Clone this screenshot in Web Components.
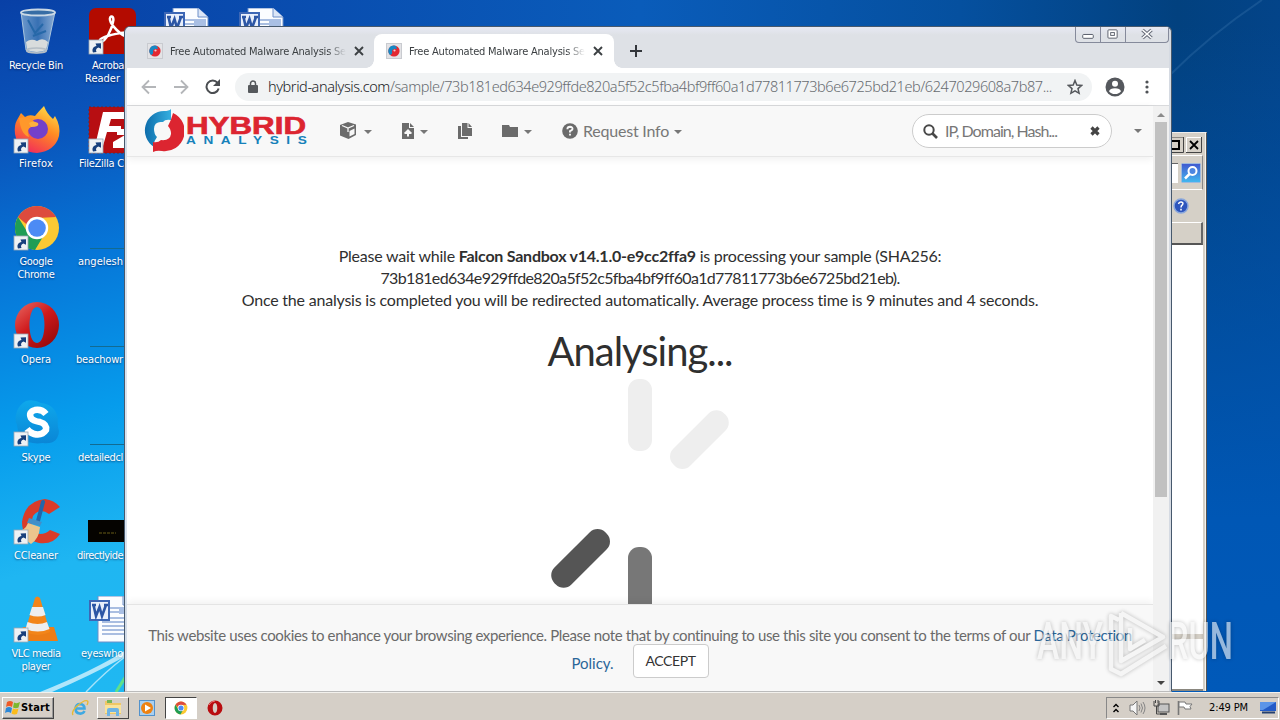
<!DOCTYPE html>
<html lang="en">
<head>
<meta charset="utf-8">
<title>Free Automated Malware Analysis Service</title>
<style>
    html, body { margin: 0; height: 100%; overflow: hidden; }
    body { font-family: "DejaVu Sans Condensed", "DejaVu Sans", sans-serif; font-size: 11px; }
</style>
</head>
<body>
<desk-top></desk-top>

<script>
const ARROW = `<g><rect x="0" y="0" width="14" height="14" fill="#eef1f4" stroke="#9aa7b4" stroke-width=".8"/>
    <path d="M4 12.5C2.500 9 4.500 6.500 7.500 6L6.500 3.500L12 3.200V8.800L9.500 7.500C7 8.500 6.500 10 7.500 12Z" fill="#173f7c"/></g>`;

const CHROME = `<circle cx="12" cy="12" r="11" fill="#fbc933"/>
    <path d="M2.500 6.500A11 11 0 0 1 21.500 6.500L12 7A5 5 0 0 0 7.200 10.500Z" fill="#dd4b3e"/>
    <path d="M2.500 6.500A11 11 0 0 0 11 23L15.500 15.500A5 5 0 0 1 7.500 14.500Z" fill="#1f9d55"/>
    <circle cx="12" cy="12" r="5.600" fill="#fff"/><circle cx="12" cy="12" r="4.400" fill="#4c8bf5"/>`;

const WORD = `<path d="M10 0H35L45 9V46H10Z" fill="#fbfdff" stroke="#6d8fc8"/><path d="M35 0V9H45" fill="#dbe6f7" stroke="#6d8fc8"/>
    <path d="M22 12H42M22 16H42M14 22H42M14 26H42M14 30H42M14 34H42M14 38H42" stroke="#8ea9d8" stroke-width="1.300"/>
    <rect x="31" y="11" width="12" height="7" fill="#a9bfe4"/>
    <rect x="2" y="5" width="19" height="19" fill="#e8effb" stroke="#3d67b5" stroke-width="2"/>
    <path d="M5.500 9L8 20L11.500 11L14 20L18 9M4 9H8M16 9H20" fill="none" stroke="#2c56a5" stroke-width="2.600"/>`;

const ICONS = {
    bin: [48, 48, `<defs><linearGradient id="b" x2="1"><stop stop-color="#8fb5d8"/><stop offset=".5" stop-color="#477fb6"/><stop offset="1" stop-color="#b5cde2"/></linearGradient></defs>
        <path d="M8 4L13 42Q24 48 34 42L42 4Z" fill="url(#b)" fill-opacity=".75" stroke="#a9c5dd"/>
        <path d="M13 34Q18 30 24 33Q30 29 35 34L33 42Q24 46 14 42Z" fill="#d8dcdc"/>
        <path d="M15 12L22 25L30 16M20 28L33 23" stroke="#2668a8" stroke-width="2" fill="none"/>
        <ellipse cx="25" cy="4.500" rx="17" ry="3" fill="#376da5" stroke="#cad8e5" stroke-width="1.800"/>
        <ellipse cx="23.500" cy="42.500" rx="10" ry="2.500" fill="none" stroke="#b5bec5" stroke-width="1.500"/>`],
    acrobat: [48, 48, `<rect x="1" width="47" height="46" rx="7" fill="#b30b00"/>
        <path d="M13 34C8 31 20 27 33 25C42 23 46 29 40 29C33 28 23 17 22 12C21 7 27 7 25 14C24 21 18 33 13 34Z" fill="none" stroke="#fff" stroke-width="2.500"/><g transform="translate(1 32)">${ARROW}</g>`],
    firefox: [48, 48, `<defs><linearGradient id="f" x1=".8" x2=".3" y2="1"><stop stop-color="#ffe14a"/><stop offset=".45" stop-color="#ff8b22"/><stop offset="1" stop-color="#f22a5b"/></linearGradient></defs>
        <path d="M4 14L8 7L12 11Q16 8 22 10Q26 5 31 0Q34 8 40 13L42 10Q48 20 46 30Q42 45 24 47Q5 46 2 28Q1 19 4 14Z" fill="url(#f)"/>
        <circle cx="25" cy="23" r="10" fill="#7440c9"/><path d="M6 12Q16 9 23 18L18 21Q13 23 16 31Q8 29 6 12Z" fill="#ff982b"/><path d="M18 21Q27 21 25 17Q20 14 16 17Z" fill="#ffb13d"/>
        <g transform="translate(1 33)">${ARROW}</g>`],
    filezilla: [48, 48, `<rect x="1" y="1" width="46" height="46" fill="#b70e12" stroke="#7e2020" stroke-dasharray="2 2"/>
        <path d="M15 6H47V13H23L21 20H33V26H19L15 40H7ZM29 23H48V29L36 36H48V42H25V36L37 29H29Z" fill="#fff"/><g transform="translate(1 33)">${ARROW}</g>`],
    chrome: [48, 48, `<svg width="48" height="48" viewBox="0 0 24 24">${CHROME}</svg><g transform="translate(1 32)">${ARROW}</g>`],
    opera: [48, 48, `<defs><linearGradient id="o" x2=".8" y2="1"><stop stop-color="#e96a64"/><stop offset=".5" stop-color="#cf1a1c"/><stop offset="1" stop-color="#960909"/></linearGradient></defs>
        <path fill-rule="evenodd" d="M24 0A22 23 0 1 1 24 46A22 23 0 1 1 24 0ZM24 5C14 5 14 41 24 41S34 5 24 5Z" fill="url(#o)"/><g transform="translate(1 32)">${ARROW}</g>`],
    skype: [48, 48, `<defs><linearGradient id="k" x2="0" y2="1"><stop stop-color="#0ea8ec"/><stop offset="1" stop-color="#0a86d6"/></linearGradient></defs>
        <path d="M13 1Q21 -1 28 3Q42 4 45 19Q44 25 46 31Q45 45 30 43Q6 46 4 25Q1 19 4 11Q7 4 13 1Z" fill="url(#k)"/>
        <path d="M33 14Q29 9 22 10Q15 12 18 18Q20 21 27 22Q34 24 33 30Q29 36 21 34Q17 33 14 29" fill="none" stroke="#fff" stroke-width="6.500"/><g transform="translate(1 32)">${ARROW}</g>`],
    ccleaner: [48, 48, `<path d="M47 9L36 16Q27 9 20 18Q15 33 27 36Q33 36 37 32L47 36Q40 47 26 45Q9 41 9 24Q12 3 32 1Q41 2 47 9Z" fill="#d93b29"/>
        <path d="M30 4L25 23" stroke="#2366aa" stroke-width="4" stroke-linecap="round"/><path d="M16 20L29 24L27 28L14 25Z" fill="#438ec8"/><path d="M15 25L27 29Q26 41 18 46L3 34Q12 33 15 25Z" fill="#ecc58d"/><g transform="translate(1 32)">${ARROW}</g>`],
    vlc: [48, 48, `<path d="M10 31H41L45 45H5Z" fill="#ec7d16"/><path d="M22 2Q24 -1 27 2L37 36Q25 42 12 36Z" fill="#f28519"/>
        <path d="M19 11H30L32.500 19Q25 22 16.500 19ZM14.500 26Q25 30 34 26L36.500 33Q25 38 12.500 33Z" fill="#eee"/><g transform="translate(1 32)">${ARROW}</g>`],
    line: [48, 48, `<path d="M2 44.500H48" stroke="#126b92"/>`],
    photo: [48, 48, `<rect x="0" y="22" width="48" height="22" fill="#050300"/><path d="M11 35H28" stroke="#695c17" stroke-dasharray="3 1"/>`],
    word: [48, 48, WORD],

    favicon: [16, 16, `<rect x=".5" y=".5" width="15" height="15" fill="#e3e3e6" stroke="#c9cbd0"/><circle cx="8" cy="8" r="5.600" fill="#e32831"/>
        <path d="M8 2.400A5.600 5.600 0 0 0 4 12Q7 11 6 8Q7 5 11 6L10 3Z" fill="#1688c4"/><circle cx="8.500" cy="7.500" r="1.100" fill="#f3c9d0"/>`],
    close: [10, 10, `<path d="M1 1L9 9M9 1L1 9" stroke="#3c4043" stroke-width="1.900"/>`],
    plus: [12, 12, `<path d="M6 0V12M0 6H12" stroke="#33363b" stroke-width="2"/>`],
    back: [16, 16, `<path d="M15 8H2M8 1.500L1.500 8L8 14.500" fill="none" stroke="#b4b6b9" stroke-width="1.800"/>`],
    forward: [16, 16, `<path d="M1 8H14M8 1.500L14.500 8L8 14.500" fill="none" stroke="#b4b6b9" stroke-width="1.800"/>`],
    reload: [16, 16, `<path d="M13.700 9.500A6.200 6.200 0 1 1 12.500 3.800" fill="none" stroke="#4b4e52" stroke-width="2"/><path d="M15 0V7H8Z" fill="#4b4e52"/>`],
    lock: [10, 13, `<rect y="5" width="10" height="8" rx="1" fill="#55585c"/><path d="M2.500 6V3.500A2.500 2.500 0 0 1 7.500 3.500V6" fill="none" stroke="#55585c" stroke-width="1.500"/>`],
    star: [16, 16, `<path d="M8 1.500L9.800 6L14.700 6.400L11 9.600L12.100 14.300L8 11.800L3.900 14.300L5 9.600L1.300 6.400L6.200 6Z" fill="none" stroke="#55585c" stroke-width="1.500"/>`],
    avatar: [20, 20, `<circle cx="10" cy="10" r="9.500" fill="#55585d"/><circle cx="10" cy="6.700" r="3" fill="#fff"/><path d="M4 14.200Q5 11.300 10 11.200Q15 11.300 16 14.200Q14 17 10 17Q6 17 4 14.200Z" fill="#fff"/>`],
    dots: [4, 14, `<g fill="#4f5256"><circle cx="2" cy="2" r="1.600"/><circle cx="2" cy="7" r="1.600"/><circle cx="2" cy="12" r="1.600"/></g>`],

    emblem: [42, 44, `<defs><linearGradient id="bl" x2="1"><stop stop-color="#0e6dab"/><stop offset="1" stop-color="#35afe0"/></linearGradient></defs>
        <path d="M29 0V11Q23 10 21 13Q12 12 12 20Q12 25 15 28Q11 33 12 38A19.500 19.500 0 0 1 22 2Q27 2 29 0Z" fill="url(#bl)"/>
        <path d="M31 4A20 20 0 0 1 20 42Q15 41 11 43V33Q16 34 19 31Q28 32 29 25Q29 20 26 17Q29 12 31 4Z" fill="#dc2530"/>
        <path d="M21 13Q14 13 14 20Q19 20 17 26L15 28Q17 31 20 30Q27 30 27 24Q22 24 24 18L26 16Q24 13 21 13Z" fill="#f8f8f8"/>`],
    cube: [18, 18, `<path d="M9 0L17 2.500V13L9.500 17L1 13.500V3Z" fill="#6b6b6b"/><path d="M3 3.500L9 6L15 3.500M9 6V10" stroke="#f8f8f8" stroke-width="1.300" fill="none"/><path d="M10.500 9L15.500 6.500V12L10.500 14.500Z" fill="#f8f8f8"/>`],
    filePlus: [14, 16, `<path d="M1 0H8V5H13V16H1Z M9 0L13 4H9Z" fill="#6b6b6b"/><path d="M7 7V13.500M3.500 10H10.500" stroke="#f8f8f8" stroke-width="2"/><path d="M3.500 9.500L7 6L10.500 9.500Z" fill="#f8f8f8"/>`],
    copy: [16, 17, `<path d="M5 0H10.500V5H15V13H5ZM11.500 0L15 4H11.500ZM1 3H4V14H11V16H1Z" fill="#6b6b6b"/>`],
    folder: [18, 14, `<path d="M1 1H8L9 3H17V13H1Z" fill="#6b6b6b"/>`],
    caret: [8, 4, `<path d="M0 0H8L4 4Z" fill="#777"/>`],
    question: [16, 16, `<circle cx="8" cy="8" r="7.800" fill="#6b6b6b"/><path d="M5.400 6.200Q5.500 3.800 8 3.800Q10.600 3.900 10.500 6Q10.300 7.200 8 8.200V9.500M8 10.700V12.500" fill="none" stroke="#f8f8f8" stroke-width="1.900"/>`],
    search: [15, 15, `<circle cx="6" cy="6" r="4.700" fill="none" stroke="#484848" stroke-width="2"/><path d="M9.500 9.500L14 14" stroke="#484848" stroke-width="2.600"/>`],
    clear: [10, 10, `<path d="M1.500 1.500L8.500 8.500M8.500 1.500L1.500 8.500" stroke="#444" stroke-width="3.200"/>`],
    up: [8, 4, `<path d="M4 0L8 4H0Z" fill="#8b8b8b"/>`],
    down: [8, 4, `<path d="M0 0H8L4 4Z" fill="#444"/>`],
    spinner: [180, 240, `<rect x="78" width="24" height="72" rx="11" fill="#eee"/>
        <rect x="78" width="24" height="72" rx="11" fill="#eee" transform="rotate(45 90 120)"/>
        <rect x="78" width="24" height="72" rx="11" fill="#777" transform="rotate(180 90 120)"/>
        <rect x="78" width="24" height="72" rx="11" fill="#555" transform="rotate(225 90 120)"/>`],

    flag: [15, 15, `<path d="M2 2Q5 0 8 2L7 7Q4 5 1 7Z" fill="#ef5a27"/><path d="M9 2.500Q12 4 15 2L13.500 7.500Q11 9 8 7.500Z" fill="#7cb82f"/><path d="M1 8Q4 6 7 8L6 13Q3 11 0 13Z" fill="#2c88d8"/><path d="M8 8.500Q11 10 13.500 8.500L12 14Q9 15 6.500 13.500Z" fill="#fbbc1c"/>`],
    ie: [18, 18, `<path d="M13.500 12Q12 15 8.500 14.500Q4.500 14 4.500 9.500Q5 5 9 5Q13.500 5.500 13.500 9.500H5" fill="none" stroke="#3fa9e2" stroke-width="2.600"/><path d="M2 16Q0 13 6 7Q14 0 16.500 2Q17.500 3 16 6" fill="none" stroke="#e8b932" stroke-width="1.400"/>`],
    explorer: [18, 18, `<path d="M1 2H7L8 4H17V15H1Z" fill="#efc765"/><rect x="3" y="1" width="5" height="3" fill="#76b657"/><path d="M1 6H17V14H1Z" fill="#f9e39b"/><path d="M3 17V11Q3 9 5 9H13Q15 9 15 11V17H12V13H6V17Z" fill="#6fb4e4"/>`],
    media: [16, 16, `<rect x=".5" y=".5" width="15" height="15" fill="#a9d0f1" stroke="#5292cc"/><circle cx="8" cy="8" r="6" fill="#ee8212"/><path d="M6 4.500L12 8L6 11.500Z" fill="#fff"/>`],
    chromeSmall: [14, 14, `<svg width="14" height="14" viewBox="0 0 24 24">${CHROME}</svg>`],
    operaSmall: [16, 16, `<path fill-rule="evenodd" d="M8 .5A7.500 7.500 0 1 1 8 15.500A7.500 7.500 0 1 1 8 .5ZM8 3C5 3 5 13 8 13S11 3 8 3Z" fill="#b90d10"/><path d="M2 5Q4 1 8 1" stroke="#e77" fill="none"/>`],
    chevrons: [6, 10, `<path d="M.5 4L3 1.500L5.500 4M.5 9L3 6.500L5.500 9" fill="none" stroke="#000" stroke-width="1.400"/>`],
    speaker: [17, 16, `<path d="M1 5H4L8 1V15L4 11H1Z" fill="#f5f5f5" stroke="#777"/><path d="M10 5Q12 8 10 11M12 3.500Q15 8 12 12.500M14 2Q18 8 14 14" fill="none" stroke="#858585"/>`],
    network: [17, 16, `<rect x="5" y="4" width="11" height="8" fill="#c4c4c4" stroke="#555"/><path d="M7 14H14" stroke="#555" stroke-width="2"/><path d="M1 1V6H6V1M3.500 6V14H7M2.500 0V3M5 0V3" fill="none" stroke="#444"/>`],
    action: [16, 16, `<path d="M1.500 1V15" stroke="#777" stroke-width="1.600"/><path d="M2 2H8L9 4H15L13 6.500L14 9H8L7 7H2Z" fill="#fff" stroke="#777"/>`],
    monitor: [17, 16, `<path d="M0 2H16V11H0Z" fill="#235bc7"/><path d="M0 2H16L3 10H0Z" fill="#5c95e8"/><path d="M2 12.500H15" stroke="#25406f" stroke-width="2"/>`],
    find: [20, 20, `<defs><linearGradient id="fd" x2="0" y2="1"><stop stop-color="#4158cf"/><stop offset="1" stop-color="#42b9f0"/></linearGradient></defs><rect x=".5" y=".5" width="19" height="19" rx="1" fill="url(#fd)" stroke="#9db9de"/><circle cx="11.500" cy="8" r="4" fill="#4e86e0" stroke="#fff" stroke-width="2"/><path d="M8.500 11L4 15.500" stroke="#fff" stroke-width="2.500"/>`],
    help: [16, 16, `<circle cx="8" cy="8" r="7" fill="#2d55bd" stroke="#8ba8dc" stroke-width="1.500"/><path d="M5.500 6Q6 3.800 8.200 4Q10.800 4.500 9.500 6.700Q8 7.800 8 9.500M8 10.800V12.500" fill="none" stroke="#fff" stroke-width="1.500"/>`],
};

class UiIcon extends HTMLElement {
    connectedCallback() {
        const [w, h, body] = ICONS[this.getAttribute("name")];
        this.attachShadow({mode: "open"});
        this.shadowRoot.innerHTML = `
            <style>
                :host { display: block; flex: none; width: ${w}px; height: ${h}px; }
                svg { display: block; }
            </style>
            <svg width="${w}" height="${h}" viewBox="0 0 ${w} ${h}">${body}</svg>
        `;
    }
}

// one line of text, tracked so that it fills the given width
class FitText extends HTMLElement {
    connectedCallback() {
        this.attachShadow({mode: "open"});
        this.shadowRoot.innerHTML = `
            <style>
                :host { display: inline-block; white-space: nowrap; flex: none; }
            </style>
            <slot></slot>
        `;
        const natural = this.getBoundingClientRect().width;
        const spacing = (this.getAttribute("width") - natural) / this.textContent.trim().length;
        this.style.letterSpacing = spacing.toFixed(4) + "px";
    }
}

class DeskIcon extends HTMLElement {
    connectedCallback() {
        this.attachShadow({mode: "open"});
        this.shadowRoot.innerHTML = `
            <style>
                :host { display: flex; flex-direction: column; align-items: center; height: 98px; color: #fff; line-height: 13px; text-shadow: 0 1px 2px #0038; }
                .label { margin-top: 3px; display: flex; flex-direction: column; align-items: center; }
                :host([cut]) .label { align-self: flex-start; align-items: flex-start; }
                :host(:not([cut])) ui-icon { margin-left: 2px; }
            </style>
            <ui-icon name="${this.getAttribute("icon")}"></ui-icon>
            <div class="label"><slot></slot></div>
        `;
    }
}

class BrowserTab extends HTMLElement {
    connectedCallback() {
        this.attachShadow({mode: "open"});
        this.shadowRoot.innerHTML = `
            <style>
                :host { display: flex; align-items: center; box-sizing: border-box; width: 240px; height: 34px; padding: 0 11px 0 12px; color: #3c4043; border-radius: 8px 8px 0 0; font-size: 11px; position: relative; }
                :host([active]) { background: #fff; margin-left: -1px; }
                .foot { display: none; position: absolute; bottom: 0; width: 8px; height: 8px; }
                :host([active]) .foot { display: block; }
                .left { left: -8px; background: radial-gradient(circle at 0 0, #0000 7.500px, #fff 8px); }
                .right { right: -8px; background: radial-gradient(circle at 100% 0, #0000 7.500px, #fff 8px); }
                .title { margin-left: 7px; width: 176px; overflow: hidden; -webkit-mask: linear-gradient(90deg, #000 158px, transparent 176px); }
                ui-icon[name=close] { margin-left: 8px; }
            </style>
            <ui-icon name="favicon"></ui-icon>
            <div class="title"><fit-text width="176">Free Automated Malware Analysis Se</fit-text></div>
            <ui-icon name="close"></ui-icon>
            <i class="foot left"></i><i class="foot right"></i>
        `;
    }
}

class BrowserBar extends HTMLElement {
    connectedCallback() {
        this.attachShadow({mode: "open"});
        this.shadowRoot.innerHTML = `
            <style>
                :host { display: block; flex: none; }
                .tabs { display: flex; align-items: flex-end; height: 41px; background: linear-gradient(#e7e9f3, #dee1e6 8px); padding-left: 8px; position: relative; }
                .tabs ui-icon[name=plus] { margin: 0 0 11px 16px; }
                .controls { position: absolute; right: 0; top: -1px; display: grid; grid-template-columns: 25px 25px 42px; height: 16px; border: 1px solid #858a9b; border-top: 0; border-radius: 0 0 4px 4px; }
                .controls svg { display: block; width: 100%; height: 16px; border-right: 1px solid #858a9b; box-sizing: border-box; }
                .controls svg:last-child { border: 0; }
                .bar { display: flex; align-items: center; height: 37px; background: #fff; border-bottom: 1px solid #d9dadc; padding-left: 14px; }
                .bar > ui-icon { margin-right: 16px; }
                .omni { display: flex; align-items: center; width: 857px; height: 28px; box-sizing: border-box; border-radius: 14px; background: #f1f3f4; padding-left: 13px; margin: 0 13px 0 -2px; color: #686c71; font: 300 14.500px "Noto Sans", sans-serif; }
                .omni fit-text { margin: -2px 15px 0 10px; }
                .omni span { color: #202124; }
                .bar ui-icon[name=avatar] { margin-right: 20px; }
            </style>
            <div class="tabs">
                <browser-tab></browser-tab>
                <browser-tab active></browser-tab>
                <ui-icon name="plus"></ui-icon>
                <div class="controls">
                    <svg viewBox="0 0 25 16"><rect x="7" y="8.500" width="11" height="4" rx="1" fill="#fff" stroke="#555a66"/></svg>
                    <svg viewBox="0 0 26 16"><rect x="7.500" y="3.500" width="10" height="9" rx="1" fill="#fff" stroke="#555a66"/><rect x="10.500" y="6.500" width="4" height="3" fill="none" stroke="#555a66"/></svg>
                    <svg viewBox="0 0 41 16"><path d="M16 4L25 12M25 4L16 12" stroke="#666b78" stroke-width="3.600"/><path d="M16 4L25 12M25 4L16 12" stroke="#fff" stroke-width="1.600"/></svg>
                </div>
            </div>
            <div class="bar">
                <ui-icon name="back"></ui-icon>
                <ui-icon name="forward"></ui-icon>
                <ui-icon name="reload"></ui-icon>
                <div class="omni">
                    <ui-icon name="lock"></ui-icon>
                    <fit-text width="784"><span>hybrid-analysis.com</span>/sample/73b181ed634e929ffde820a5f52c5fba4bf9ff60a1d77811773b6e6725bd21eb/6247029608a7b87...</fit-text>
                    <ui-icon name="star"></ui-icon>
                </div>
                <ui-icon name="avatar"></ui-icon>
                <ui-icon name="dots"></ui-icon>
            </div>
        `;
    }
}

class SiteHeader extends HTMLElement {
    connectedCallback() {
        this.attachShadow({mode: "open"});
        this.shadowRoot.innerHTML = `
            <style>
                :host { display: flex; align-items: center; flex: none; height: 51px; box-sizing: border-box; background: #f8f8f8; border-bottom: 1px solid #e7e7e7; box-shadow: 0 2px 8px #0001; padding-left: 15px; color: #777; font: 16px Lato, sans-serif; }
                .brand { display: flex; align-items: center; width: 197px; }
                .brand svg { display: block; }
                .item { display: flex; align-items: center; }
                .item ui-icon[name=caret] { margin-left: 7px; margin-top: 2px; }
                .item ui-icon[name=question] { margin-right: 5px; }
                .item fit-text, .search fit-text { position: relative; top: -1px; }
                .search { display: flex; align-items: center; box-sizing: border-box; width: 200px; height: 34px; margin-left: 230px; padding: 0 11px 0 10px; border: 1px solid #ccc; border-radius: 17px; background: #fff; }
                .search fit-text { margin: 0 auto 0 7px; color: #777; }
            </style>
            <div class="brand">
                <ui-icon name="emblem"></ui-icon>
                <svg width="126" height="34" viewBox="0 0 126 34">
                    <text x="2" y="20" font-family="Liberation Sans" font-weight="bold" font-size="23" fill="#dc2530" stroke="#dc2530" stroke-width=".6" textLength="120" lengthAdjust="spacingAndGlyphs">HYBRID</text>
                    <text x="1.500" y="30.500" transform="scale(1.3 1)" font-family="Liberation Sans" font-weight="bold" font-size="10.500" fill="#1681ba" textLength="93">ANALYSIS</text>
                </svg>
            </div>
            <div class="item"><ui-icon name="cube"></ui-icon><ui-icon name="caret"></ui-icon></div>
            <div class="item" style="margin-left: 29px"><ui-icon name="filePlus"></ui-icon><ui-icon name="caret" style="margin-left: 5px"></ui-icon></div>
            <div class="item" style="margin-left: 29px"><ui-icon name="copy"></ui-icon></div>
            <div class="item" style="margin-left: 28px"><ui-icon name="folder"></ui-icon><ui-icon name="caret" style="margin-left: 5px"></ui-icon></div>
            <div class="item" style="margin-left: 30px"><ui-icon name="question"></ui-icon><fit-text width="86">Request Info</fit-text><ui-icon name="caret" style="margin-left: 5px"></ui-icon></div>
            <div class="search"><ui-icon name="search"></ui-icon><fit-text width="112">IP, Domain, Hash...</fit-text><ui-icon name="clear"></ui-icon></div>
            <ui-icon name="caret" style="margin-left: 22px"></ui-icon>
        `;
    }
}

class AnalysisStatus extends HTMLElement {
    connectedCallback() {
        this.attachShadow({mode: "open"});
        this.shadowRoot.innerHTML = `
            <style>
                :host { display: flex; flex-direction: column; align-items: center; flex: 1; min-height: 0; overflow: hidden; padding-top: 88px; color: #2f2f2f; font: 16px/22px Lato, sans-serif; }
                h1 { margin: 16px 0 0; font-size: 40px; font-weight: 400; line-height: 48px; height: 48px; }
                ui-icon { margin-top: 4px; }
            </style>
            <fit-text width="602">Please wait while <b>Falcon Sandbox v14.1.0-e9cc2ffa9</b> is processing your sample (SHA256:</fit-text>
            <fit-text width="518">73b181ed634e929ffde820a5f52c5fba4bf9ff60a1d77811773b6e6725bd21eb).</fit-text>
            <fit-text width="797">Once the analysis is completed you will be redirected automatically. Average process time is 9 minutes and 4 seconds.</fit-text>
            <h1><fit-text width="185">Analysing...</fit-text></h1>
            <ui-icon name="spinner"></ui-icon>
        `;
    }
}

class CookieBar extends HTMLElement {
    connectedCallback() {
        this.attachShadow({mode: "open"});
        this.shadowRoot.innerHTML = `
            <style>
                :host { display: flex; flex-direction: column; align-items: center; flex: none; height: 87px; box-sizing: border-box; padding-top: 19px; background: #f8f8f8; border-top: 1px solid #e4e4e4; box-shadow: 0 -2px 8px #0001; color: #6a6a6a; font: 15px/22px Lato, sans-serif; }
                .row { display: flex; gap: 19px; margin-top: -2px; }
                .link { color: #2b6699; }
                .row .link { margin-top: 8px; }
                button { width: 76px; height: 34px; padding: 0 0 2px; border: 1px solid #ccc; border-radius: 4px; background: #fff; color: #333; font: 14px Lato, sans-serif; }
            </style>
            <fit-text width="984">This website uses cookies to enhance your browsing experience. Please note that by continuing to use this site you consent to the terms of our <span class="link">Data Protection</span></fit-text>
            <div class="row"><fit-text class="link" width="42">Policy.</fit-text><button><fit-text width="50">ACCEPT</fit-text></button></div>
        `;
    }
}

class BrowserWindow extends HTMLElement {
    connectedCallback() {
        this.attachShadow({mode: "open"});
        this.shadowRoot.innerHTML = `
            <style>
                :host { display: flex; flex-direction: column; box-sizing: border-box; background: #fff; border: 1px solid #47596d; border-bottom-color: #bbb; border-radius: 6px 6px 0 0; box-shadow: inset 2px 0 #d9e3ef, inset -2px 0 #d5dae2; padding: 0 2px; overflow: hidden; }
                .view { display: flex; flex: 1; min-height: 0; }
                .page { display: flex; flex-direction: column; flex: 1; min-width: 0; }
                .scroll { width: 16px; flex: none; display: flex; flex-direction: column; align-items: center; background: #f1f1f1; }
                .scroll ui-icon[name=up] { margin: 7px 0 5px; }
                .thumb { width: 12px; height: 375px; background: #c1c1c1; }
                .scroll ui-icon[name=down] { margin: auto 0 6px; }
            </style>
            <browser-bar></browser-bar>
            <div class="view">
                <div class="page">
                    <site-header></site-header>
                    <analysis-status></analysis-status>
                    <cookie-bar></cookie-bar>
                </div>
                <div class="scroll"><ui-icon name="up"></ui-icon><div class="thumb"></div><ui-icon name="down"></ui-icon></div>
            </div>
        `;
    }
}

// the explorer window, of which only the right edge shows
class BackWindow extends HTMLElement {
    connectedCallback() {
        this.attachShadow({mode: "open"});
        this.shadowRoot.innerHTML = `
            <style>
                :host { display: flex; flex-direction: column; box-sizing: border-box; background: #d5d0c7; border-right: 1px solid #555; border-top: 1px solid #eee; padding: 2px 3px 0 0; box-shadow: inset -1px 0 #f5f3ee; }
                .title { display: flex; height: 20px; gap: 2px; align-items: center; }
                .title svg { display: block; }
                .search { display: flex; align-items: center; height: 33px; border: 1px solid #fff; border-left: 0; border-right-color: #888; }
                .input { width: 7px; height: 19px; margin-right: 3px; background: #fff; border-top: 1px solid #666; }
                .tools { display: flex; align-items: center; height: 32px; }
                .head { height: 20px; border: 1px solid #fff; border-right: 2px solid #666; border-bottom: 2px solid #555; }
                .list { flex: 1; background: #fff; }
                .gap { height: 5px; background: #d5d0c7; }
                .foot { height: 50px; background: #fff; border-bottom: 2px solid #8a877f; }
            </style>
            <div class="title">
                <svg width="13" height="16"><path d="M0 0H12.500V15.500H0" fill="#d5d0c7" stroke="#444"/><path d="M0 4H8V12H0" fill="none" stroke="#000" stroke-width="2"/></svg>
                <svg width="16" height="16"><path d="M0 0H16V16H0Z" fill="#d5d0c7"/><path d="M.5 15V.5H15" stroke="#fff" fill="none"/><path d="M15.500 0V15.500H0" stroke="#444" fill="none"/><path d="M4 4L12 12M12 4L4 12" stroke="#000" stroke-width="1.800"/></svg>
            </div>
            <div class="search"><div class="input"></div><ui-icon name="find"></ui-icon></div>
            <div class="tools"><ui-icon name="help" style="margin-left: 2px"></ui-icon></div>
            <div class="head"></div>
            <div class="list"></div>
            <div class="gap"></div>
            <div class="foot"></div>
        `;
    }
}

class TaskBar extends HTMLElement {
    connectedCallback() {
        this.attachShadow({mode: "open"});
        this.shadowRoot.innerHTML = `
            <style>
                :host { display: flex; align-items: center; box-sizing: border-box; height: 28px; padding: 2px 1px 0 2px; background: #d5cfc7; border-top: 1px solid #f3f1ed; color: #000; }
                .start, .task { display: flex; align-items: center; box-sizing: border-box; height: 22px; border: 1px solid; border-color: #fff #444 #444 #fff; }
                .start { width: 52px; padding-left: 2px; font-weight: bold; box-shadow: inset -1px -1px #999; }
                .start fit-text { margin-left: 1px; }
                .task { width: 32px; justify-content: center; }
                .active { background: #fff; border-color: #444 #fff #fff #444; }
                .tray { display: flex; align-items: center; box-sizing: border-box; width: 173px; height: 22px; margin-left: auto; border: 1px solid; border-color: #888 #fff #fff #888; padding-left: 6px; }
            </style>
            <div class="start"><ui-icon name="flag"></ui-icon><fit-text width="29">Start</fit-text></div>
            <ui-icon name="ie" style="margin: 0 8px 0 17px"></ui-icon>
            <div class="task"><ui-icon name="explorer"></ui-icon></div>
            <ui-icon name="media" style="margin: 0 10px"></ui-icon>
            <div class="task active"><ui-icon name="chromeSmall"></ui-icon></div>
            <ui-icon name="operaSmall" style="margin-left: 10px"></ui-icon>
            <div class="tray">
                <ui-icon name="chevrons"></ui-icon>
                <ui-icon name="speaker" style="margin-left: 10px"></ui-icon>
                <ui-icon name="network" style="margin-left: 7px"></ui-icon>
                <ui-icon name="action" style="margin-left: 7px"></ui-icon>
                <fit-text width="39" style="margin: 0 12px 0 16px">2:49 PM</fit-text>
                <ui-icon name="monitor"></ui-icon>
            </div>
        `;
    }
}

class WaterMark extends HTMLElement {
    connectedCallback() {
        this.attachShadow({mode: "open"});
        this.shadowRoot.innerHTML = `
            <style>
                :host { display: block; pointer-events: none; }
                svg { display: block; filter: drop-shadow(0 0 2px #0006); opacity: .62; }
            </style>
            <svg width="204" height="70" viewBox="0 0 204 70" font-family="Roboto" font-size="51" font-weight="500" fill="#f4f4f4">
                <text x="4" y="52" textLength="66" lengthAdjust="spacingAndGlyphs">ANY</text>
                <path d="M88 6V54L130 30L88 6M78 26V9L86 13M78 32V62L88 67L133 39M97 21V42L112 33" fill="none" stroke="#f4f4f4" stroke-width="4.500" stroke-linejoin="round"/>
                <text x="135" y="52" textLength="65" lengthAdjust="spacingAndGlyphs">RUN</text>
            </svg>
        `;
    }
}

class DeskTop extends HTMLElement {
    connectedCallback() {
        this.attachShadow({mode: "open"});
        this.shadowRoot.innerHTML = `
            <style>
                :host { display: flex; flex-direction: column; position: relative; width: 1280px; height: 720px; overflow: hidden; }
                .area { flex: 1; position: relative; overflow: hidden; background:
                    linear-gradient(165deg, #0840a6 0, #0a55bb 20%, #0676d8 38%, #069cec 60%, #1fb6f2 80%, #1fb8f2) 0 0 / 130px 692px no-repeat,
                    linear-gradient(#0049a000 26px, #0057b5 75%, #0059b9 100%) 1172px 0 / 108px 100% no-repeat,
                    linear-gradient(90deg, #0840a6, #0a5cba 50%, #05509f 75%, #02417f 92%, #034489); }
                .rays { position: absolute; left: 0; top: 0; }
                .icons { display: grid; grid-template-columns: 72px 72px; column-gap: 4px; grid-auto-rows: 98px; padding-top: 8px; }
                .docs { position: absolute; left: 163px; top: 8px; display: flex; gap: 27px; }
                browser-window { position: absolute; left: 124px; top: 26px; width: 1048px; height: 666px; }
                back-window { position: absolute; left: 1171px; top: 132px; width: 36px; height: 559px; }
                water-mark { position: absolute; left: 1033px; top: 607px; }
            </style>
            <div class="area">
                <svg class="rays" width="1280" height="692">
                    <path d="M40 692Q95 670 126 650L126 656Q90 676 52 692Z" fill="#fff" opacity=".65"/>
                    <path d="M86 692Q105 672 126 656" stroke="#fff" stroke-width="1.500" opacity=".6" fill="none"/>
                    <path d="M116 692L126 676" stroke="#5fe08a" stroke-width="3"/>
                    <path d="M1170 75Q1210 35 1262 0" stroke="#4f86bd" stroke-width="2" opacity=".25" fill="none"/>
                </svg>
                <div class="icons">
                    <desk-icon icon="bin"><fit-text width="54">Recycle Bin</fit-text></desk-icon>
                    <desk-icon icon="acrobat" cut><fit-text width="32" style="margin-left: 16px">Acroba</fit-text><fit-text width="35" style="margin-left: 9px">Reader</fit-text></desk-icon>
                    <desk-icon icon="firefox"><fit-text width="34">Firefox</fit-text></desk-icon>
                    <desk-icon icon="filezilla" cut><fit-text width="45" style="margin-left: 3px">FileZilla C</fit-text></desk-icon>
                    <desk-icon icon="chrome"><fit-text width="33">Google</fit-text><fit-text width="37">Chrome</fit-text></desk-icon>
                    <desk-icon icon="line" cut><fit-text width="45" style="margin-left: 2px">angelesh</fit-text></desk-icon>
                    <desk-icon icon="opera"><fit-text width="30">Opera</fit-text></desk-icon>
                    <desk-icon icon="line" cut><fit-text width="47">beachowr</fit-text></desk-icon>
                    <desk-icon icon="skype"><fit-text width="29">Skype</fit-text></desk-icon>
                    <desk-icon icon="line" cut><fit-text width="45" style="margin-left: 2px">detailedcl</fit-text></desk-icon>
                    <desk-icon icon="ccleaner"><fit-text width="44">CCleaner</fit-text></desk-icon>
                    <desk-icon icon="photo" cut><fit-text width="46" style="margin-left: 1px">directlyide</fit-text></desk-icon>
                    <desk-icon icon="vlc"><fit-text width="49">VLC media</fit-text><fit-text width="29">player</fit-text></desk-icon>
                    <desk-icon icon="word" cut><fit-text width="42" style="margin-left: 5px">eyeswho</fit-text></desk-icon>
                </div>
                <div class="docs"><ui-icon name="word"></ui-icon><ui-icon name="word"></ui-icon></div>
                <back-window></back-window>
                <browser-window></browser-window>
            </div>
            <task-bar></task-bar>
            <water-mark></water-mark>
        `;
    }
}

customElements.define("ui-icon", UiIcon);
customElements.define("fit-text", FitText);
customElements.define("desk-icon", DeskIcon);
customElements.define("browser-tab", BrowserTab);
customElements.define("browser-bar", BrowserBar);
customElements.define("site-header", SiteHeader);
customElements.define("analysis-status", AnalysisStatus);
customElements.define("cookie-bar", CookieBar);
customElements.define("browser-window", BrowserWindow);
customElements.define("back-window", BackWindow);
customElements.define("task-bar", TaskBar);
customElements.define("water-mark", WaterMark);
customElements.define("desk-top", DeskTop);
</script>
</body>
</html>
